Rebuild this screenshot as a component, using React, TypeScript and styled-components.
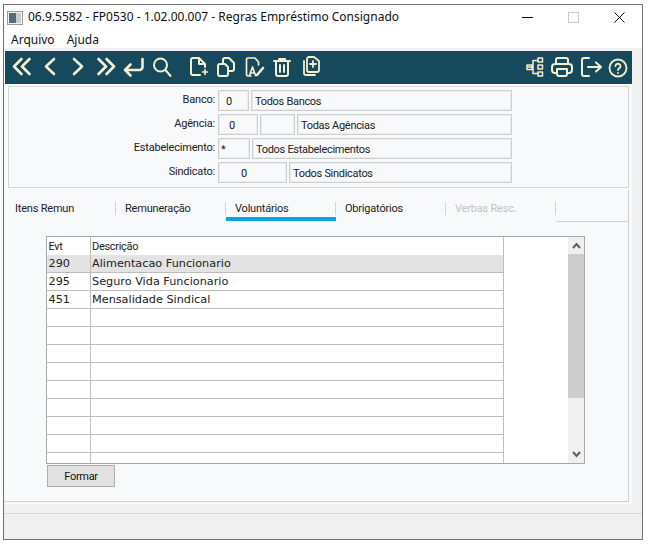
import React from "react";
import styled, { createGlobalStyle } from "styled-components";

const Global = createGlobalStyle`
  html, body { margin: 0; padding: 0; background: #fff; }
  body { font-family: Roboto, "Noto Sans", sans-serif; font-size: 11px; color: #111; }
  * { box-sizing: border-box; }
`;

const Page = styled.div`
  width: 648px;
  height: 544px;
  padding: 4px 5px 4px 3px;
`;
const Win = styled.div`
  width: 640px;
  height: 536px;
  border: 1px solid #707070;
  background: #fff;
  display: flex;
  flex-direction: column;
  overflow: hidden;
`;
const TitleBar = styled.div`
  height: 25px;
  display: flex;
  align-items: center;
  padding-left: 3px;
`;
const AppIcon = styled.svg`
  width: 16px;
  height: 14px;
  margin-right: 5px;
  flex: none;
`;
const TitleText = styled.div`
  flex: 1;
  font-family: "Noto Sans", sans-serif;
  font-size: 12px;
  line-height: 14px;
  padding-bottom: 2px;
  color: #111;
  white-space: nowrap;
`;
const WinBtn = styled.div`
  width: 46px;
  height: 25px;
  display: flex;
  align-items: center;
  justify-content: center;
`;
const MenuBar = styled.div`
  height: 18px;
  display: flex;
  padding-left: 7px;
  gap: 12px;
  font-family: "Noto Sans", sans-serif;
  font-size: 12px;
  line-height: 20px;
  color: #111;
`;
const MenuItem = styled.div``;
const Body = styled.div`
  flex: 1;
  display: flex;
  flex-direction: column;
  background: #f0f0f0;
  padding-top: 3px;
`;
const Upper = styled.div`
  display: flex;
`;
const Main = styled.div`
  width: 628px;
  height: 453px;
  background: #f8f9fb;
  display: flex;
  flex-direction: column;
`;
const Toolbar = styled.div`
  height: 33px;
  margin-left: 1px;
  padding: 4px 0 0 3px;
  background: #17495c;
  display: flex;
  justify-content: space-between;
  flex: none;
`;
const ToolGroup = styled.div`
  display: flex;
`;
const ToolCluster = styled.div`
  display: flex;
  gap: 8px;
`;
const ToolBtn = styled.div`
  width: 28px;
  height: 24px;
  display: flex;
  justify-content: center;
`;
const Glyph = styled.svg.attrs({
  viewBox: "0 0 24 24",
  width: 24,
  height: 24,
  fill: "none",
})<{ $w?: number }>`
  stroke: #f3efd0;
  stroke-width: ${(p) => p.$w ?? 2};
  stroke-linecap: round;
  stroke-linejoin: round;
`;
const Frame = styled.div`
  margin: 2px 3px 0 4px;
  height: 102px;
  border: 1px solid #d6d6d6;
  padding-top: 3px;
  display: flex;
  flex-direction: column;
  gap: 3px;
  flex: none;
`;
const FieldRow = styled.div`
  height: 21px;
  display: flex;
  gap: 2px;
`;
const Label = styled.div`
  width: 206px;
  margin-right: 1px;
  text-align: right;
  line-height: 20px;
  letter-spacing: -0.2px;
  color: #222;
`;
const Field = styled.div<{ $w?: number; $pad?: number }>`
  ${(p) => (p.$w ? `width: ${p.$w}px; flex: none;` : "flex: 1;")}
  margin-right: ${(p) => (p.$w ? 0 : 116)}px;
  border: 1px solid #cfcfcf;
  box-shadow: inset 0 0 0 1px #ececec;
  line-height: 22px;
  padding-left: ${(p) => p.$pad ?? 3}px;
  letter-spacing: -0.3px;
  color: #222;
  white-space: nowrap;
`;
const Tabs = styled.div`
  display: flex;
  margin: 2px 3px 0 1px;
  height: 32px;
  flex: none;
`;
const Tab = styled.div<{ $active?: boolean; $off?: boolean; $w: number }>`
  width: ${(p) => p.$w}px;
  height: 31px;
  flex: none;
  padding: 11px 0 0 ${(p) => (p.$w === 111 ? 10 : 9)}px;
  line-height: 16px;
  letter-spacing: -0.2px;
  color: ${(p) => (p.$off ? "#c4c4c4" : "#222")};
  border-bottom: 4px solid ${(p) => (p.$active ? "#0aa3e6" : "transparent")};
  background: linear-gradient(#d4d4d4, #d4d4d4) no-repeat right 12px / 1px 13px;
`;
const TabRest = styled.div`
  flex: 1;
  border-bottom: 1px solid #d0d0d0;
  border-right: 1px solid #d0d0d0;
`;
const TabPanel = styled.div`
  height: 280px;
  margin-right: 3px;
  padding: 14px 0 0 42px;
  border-right: 1px solid #d0d0d0;
  border-bottom: 1px solid #d0d0d0;
  flex: none;
`;
const GridBox = styled.div`
  width: 539px;
  height: 228px;
  border: 1px solid #a8a8a8;
  background: #fff;
  display: flex;
  overflow: hidden;
`;
const GridCols = styled.div`
  width: 457px;
  border-right: 1px solid #bdbdbd;
  flex: none;
  font-family: "DejaVu Sans", sans-serif;
  font-size: 11.25px;
`;
const GridHead = styled.div`
  height: 18px;
  display: flex;
  font-family: Roboto, sans-serif;
  font-size: 11px;
  letter-spacing: -0.3px;
  color: #222;
  line-height: 20px;
`;
const GridRow = styled.div<{ $sel?: boolean }>`
  height: 18px;
  display: flex;
  border-bottom: 1px solid #bdbdbd;
  background: ${(p) => (p.$sel ? "#e3e3e3" : "#fff")};
  line-height: 17px;
  color: #222;
`;
const CellEvt = styled.div`
  width: 44px;
  flex: none;
  padding-left: 1.500px;
  border-right: 1px solid #bdbdbd;
`;
const CellDesc = styled.div`
  flex: 1;
  padding-left: 1px;
  white-space: nowrap;
`;
const GridBlank = styled.div`
  flex: 1;
`;
const Scroll = styled.div`
  width: 16px;
  flex: none;
  background: #f0f0f0;
  display: flex;
  flex-direction: column;
`;
const ScrollBtn = styled.div`
  height: 17px;
  display: flex;
  align-items: center;
  justify-content: center;
  flex: none;
`;
const ScrollThumb = styled.div`
  height: 144px;
  background: #cdcdcd;
  flex: none;
`;
const ScrollTrack = styled.div`
  flex: 1;
`;
const FormBtn = styled.div`
  width: 68px;
  height: 22px;
  margin: 1px 0 0 1px;
  background: #e1e1e1;
  border: 1px solid #adadad;
  text-align: center;
  line-height: 22px;
  letter-spacing: -0.3px;
  color: #111;
`;
const RightStrip = styled.div`
  width: 10px;
`;
const Status = styled.div`
  height: 10px;
  border-bottom: 1px solid #d8d8d8;
  flex: none;
`;

const Chev = ({ up }: { up?: boolean }) => (
  <svg width="9" height="7" viewBox="0 0 9 7" fill="none" stroke="#5f5f5f" strokeWidth="2">
    <path d={up ? "M1 6 L4.5 2 L8 6" : "M1 1 L4.5 5 L8 1"} />
  </svg>
);

const rows = [
  ["290", "Alimentacao Funcionario"],
  ["295", "Seguro Vida Funcionario"],
  ["451", "Mensalidade Sindical"],
  ...Array.from({ length: 9 }, () => ["", ""]),
];

export default function App() {
  return (
    <Page>
      <Global />
      <Win>
        <TitleBar>
          <AppIcon viewBox="0 0 16 14">
            <rect x="0.5" y="0.5" width="15" height="13" fill="#f4f4f4" stroke="#9a9a9a" />
            <rect x="2" y="2" width="7" height="10" fill="#4c6f78" />
            <rect x="9" y="2" width="5" height="10" fill="#c8cdd0" />
          </AppIcon>
          <TitleText>06.9.5582 - FP0530 - 1.02.00.007 - Regras Empréstimo Consignado</TitleText>
          <WinBtn>
            <svg width="11" height="11" viewBox="0 0 11 11"><path d="M0 5.5H11" stroke="#111" /></svg>
          </WinBtn>
          <WinBtn>
            <svg width="11" height="11" viewBox="0 0 11 11"><rect x="0.5" y="0.5" width="10" height="10" fill="none" stroke="#ccc" /></svg>
          </WinBtn>
          <WinBtn>
            <svg width="11" height="11" viewBox="0 0 11 11"><path d="M0.5 0.5L10.5 10.5M10.5 0.5L0.5 10.5" stroke="#111" /></svg>
          </WinBtn>
        </TitleBar>
        <MenuBar>
          <MenuItem>Arquivo</MenuItem>
          <MenuItem>Ajuda</MenuItem>
        </MenuBar>
        <Body>
          <Upper>
            <Main>
              <Toolbar>
                <ToolCluster>
                  <ToolGroup>
                    <ToolBtn><Glyph $w={2.6}><path d="M11.500 4L4 11.500L11.500 19M19.500 4L12 11.500L19.500 19" /></Glyph></ToolBtn>
                    <ToolBtn><Glyph $w={2.6}><path d="M16 4L8 11.500L16 19" /></Glyph></ToolBtn>
                    <ToolBtn><Glyph $w={2.6}><path d="M8 4L16 11.500L8 19" /></Glyph></ToolBtn>
                    <ToolBtn><Glyph $w={2.6}><path d="M4.500 4L12 11.500L4.500 19M12.500 4L20 11.500L12.500 19" /></Glyph></ToolBtn>
                    <ToolBtn><Glyph $w={2.6}><path d="M20.500 4V12a3 3 0 0 1-3 3H3M8.500 9.500L3 15L8.500 20.500" /></Glyph></ToolBtn>
                    <ToolBtn><Glyph><circle cx="10.5" cy="10" r="6.5" /><path d="M15.5 15L20.5 21" /></Glyph></ToolBtn>
                  </ToolGroup>
                  <ToolGroup>
                    <ToolBtn><Glyph><path d="M14 20H7a2 2 0 0 1-2-2V5a2 2 0 0 1 2-2h6l6 6v3M13 3v6h6" /><path d="M16.500 17h5M19 14.500v5" strokeWidth="1.600" /></Glyph></ToolBtn>
                    <ToolBtn><Glyph><path d="M4 11a2 2 0 0 1 2-2h5l3 3v7a2 2 0 0 1-2 2H6a2 2 0 0 1-2-2zM9 8V5a2 2 0 0 1 2-2h4l5 5v6a2 2 0 0 1-2 2h-4" /></Glyph></ToolBtn>
                    <ToolBtn><Glyph $w={1.7}><path d="M9 21H6a1.500 1.500 0 0 1-1.500-1.500V4.500A1.500 1.500 0 0 1 6 3h7l3.500 4v3M7.500 20.500L10.500 12l3 8.500M8.500 18h4" /><path d="M15 20L21 13" strokeWidth="2.600" /></Glyph></ToolBtn>
                    <ToolBtn><Glyph><path d="M4 6h16M9 6V4h6v2M6 7v12a2 2 0 0 0 2 2h8a2 2 0 0 0 2-2V7M10 10v7M14 10v7" /></Glyph></ToolBtn>
                    <ToolBtn><Glyph $w={1.8}><path d="M9 4a2 2 0 0 1 2-2h5l5 4v9a2 2 0 0 1-2 2h-8a2 2 0 0 1-2-2zM6 6v12a2 2 0 0 0 2 2h9M15 6v6M12 9h6" /></Glyph></ToolBtn>
                  </ToolGroup>
                </ToolCluster>
                <ToolGroup>
                  <ToolBtn><Glyph $w={1.500}><path d="M16 5.500H11V18.500h5M6 12h5" /><rect x="16" y="3" width="4.500" height="4" /><rect x="16" y="10" width="4.500" height="4" /><rect x="16" y="17" width="4.500" height="4" /><rect x="5" y="10" width="5" height="4.500" /></Glyph></ToolBtn>
                  <ToolBtn><Glyph><path d="M6 9V5a2 2 0 0 1 2-2h8a2 2 0 0 1 2 2v4M6 18H5a3 3 0 0 1-3-3v-3a3 3 0 0 1 3-3h14a3 3 0 0 1 3 3v3a3 3 0 0 1-3 3h-1" /><path d="M7 14h10v5a2 2 0 0 1-2 2H9a2 2 0 0 1-2-2z" /></Glyph></ToolBtn>
                  <ToolBtn><Glyph><path d="M11 21H6a2 2 0 0 1-2-2V5a2 2 0 0 1 2-2h5M10 12h13M18 7.500l5 4.500-5 4.500" /></Glyph></ToolBtn>
                  <ToolBtn><Glyph $w={1.800}><circle cx="12" cy="13" r="8.500" /><path d="M9.500 11a2.500 2.500 0 0 1 5 .5c0 1.500-2.500 2-2.500 3.500M12 18v.01" /></Glyph></ToolBtn>
                </ToolGroup>
              </Toolbar>
              <Frame>
                <FieldRow><Label>Banco:</Label><Field $w={31} $pad={7}>0</Field><Field>Todos Bancos</Field></FieldRow>
                <FieldRow><Label>Agência:</Label><Field $w={40} $pad={10}>0</Field><Field $w={35} /><Field>Todas Agências</Field></FieldRow>
                <FieldRow><Label>Estabelecimento:</Label><Field $w={32} $pad={2}>*</Field><Field>Todos Estabelecimentos</Field></FieldRow>
                <FieldRow><Label>Sindicato:</Label><Field $w={69} $pad={22}>0</Field><Field>Todos Sindicatos</Field></FieldRow>
              </Frame>
              <Tabs>
                <Tab $w={111}>Itens Remun</Tab>
                <Tab $w={110}>Remuneração</Tab>
                <Tab $w={110} $active>Voluntários</Tab>
                <Tab $w={110}>Obrigatórios</Tab>
                <Tab $w={110} $off>Verbas Resc.</Tab>
                <TabRest />
              </Tabs>
              <TabPanel>
                <GridBox>
                  <GridCols>
                    <GridHead><CellEvt>Evt</CellEvt><CellDesc>Descrição</CellDesc></GridHead>
                    {rows.map((r, i) => (
                      <GridRow key={i} $sel={i === 0}><CellEvt>{r[0]}</CellEvt><CellDesc>{r[1]}</CellDesc></GridRow>
                    ))}
                  </GridCols>
                  <GridBlank />
                  <Scroll>
                    <ScrollBtn><Chev up /></ScrollBtn>
                    <ScrollThumb />
                    <ScrollTrack />
                    <ScrollBtn><Chev /></ScrollBtn>
                  </Scroll>
                </GridBox>
                <FormBtn>Formar</FormBtn>
              </TabPanel>
            </Main>
            <RightStrip />
          </Upper>
          <Status />
        </Body>
      </Win>
    </Page>
  );
}
